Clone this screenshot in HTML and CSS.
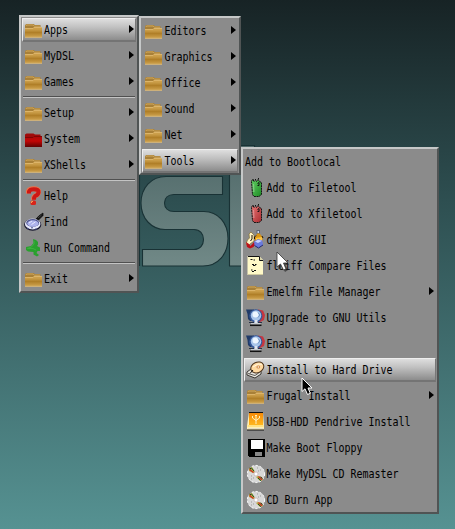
FILE: index.html
```html
<!DOCTYPE html>
<html lang="en">
<head>
<meta charset="utf-8">
<title>Desktop menu</title>
<link rel="stylesheet" href="styles.css">
</head>
<body>
<svg class="defs" width="0" height="0">
  <defs>
    <linearGradient id="gold" x1="0" y1="0" x2="0" y2="1"><stop offset="0" stop-color="#d2a450"/><stop offset=".25" stop-color="#c79a45"/><stop offset=".5" stop-color="#b07f28"/><stop offset=".8" stop-color="#c69843"/><stop offset="1" stop-color="#dab76e"/></linearGradient>
    <linearGradient id="red" x1="0" y1="0" x2="0" y2="1"><stop offset="0" stop-color="#a80808"/><stop offset=".45" stop-color="#c40606"/><stop offset="1" stop-color="#5e0404"/></linearGradient>
    <linearGradient id="greenTag" x1="0" y1="0" x2="1" y2="1"><stop offset="0" stop-color="#63cf63"/><stop offset="1" stop-color="#1c8a24"/></linearGradient>
    <linearGradient id="redTag" x1="0" y1="0" x2="1" y2="1"><stop offset="0" stop-color="#e87474"/><stop offset="1" stop-color="#a82c30"/></linearGradient>
    <linearGradient id="orange" x1="0" y1="0" x2="0" y2="1"><stop offset="0" stop-color="#f58a08"/><stop offset="1" stop-color="#ffb71e"/></linearGradient>
    <linearGradient id="letter" x1="0" y1="145" x2="0" y2="266" gradientUnits="userSpaceOnUse"><stop offset="0" stop-color="#4f6868"/><stop offset="1" stop-color="#718987"/></linearGradient>
    <symbol id="folder" viewBox="0 0 20 20">
      <path d="M1 7V5L2.500 4H9.500L11 5H16.500V8H1Z" fill="#a88038"/>
      <path d="M2 6V5.500L3 5H9L10.500 6.200H16" fill="none" stroke="#cfa75d"/>
      <path d="M1 8H9L10 7H18V18H1Z" fill="url(#gold)"/>
      <path d="M1 8.500H9L10 7.500H18" fill="none" stroke="#dcb469"/>
      <path d="M1 17.500H18" stroke="#cdb07a"/>
    </symbol>
    <symbol id="folder-red" viewBox="0 0 20 20">
      <path d="M1 8V5.500L2.500 4.500H9.500L11 5.500H16.500V8Z" fill="#a00a0a"/>
      <path d="M1 8H9L10 7H18V18H1Z" fill="url(#red)"/>
      <path d="M1 8.500H9L10 7.500H18" fill="none" stroke="#7e0404"/>
    </symbol>
    <symbol id="help" viewBox="0 0 20 20">
      <path d="M4.500 7.500V5Q5.500 2.800 9.500 2.800Q15 2.800 14.500 6.200Q14 9 11 10Q9.500 11 9.500 13.800" fill="none" stroke="#ee7048" stroke-width="5"/>
      <path d="M5 7.500V5.500Q6 3.300 9.800 3.300Q15 3.300 14.600 6.200Q14 8.900 11.200 10Q10 11 10 13.800" fill="none" stroke="#cc1714" stroke-width="4"/>
      <rect x="6.500" y="14.500" width="5.500" height="4.500" rx="1.500" fill="#d8241a"/><path d="M7.500 17V15.500H9" stroke="#f6a056" fill="none"/>
    </symbol>
    <symbol id="find" viewBox="0 0 20 20">
      <path d="M12 7L15 3.800L19 1V3.500L14.500 8Z" fill="#111" stroke="#111" stroke-width=".8"/><path d="M14 6L17.500 3" stroke="#444"/>
      <ellipse cx="8.700" cy="12.700" rx="8.600" ry="6" fill="#15152d"/>
      <ellipse cx="8.700" cy="12" rx="7.800" ry="5.400" fill="#e6e8fa"/>
      <ellipse cx="8.700" cy="10.900" rx="6.500" ry="3.900" fill="#4e548c"/>
      <ellipse cx="8.900" cy="11.500" rx="5.600" ry="3.300" fill="#aeb3ec"/>
      <path d="M5 11L8 9M7.500 12.500L11.500 9.800" stroke="#e9ebff"/>
      <path d="M3 16L5 17M7 15.800H9M11 17H13" stroke="#4e548c"/>
    </symbol>
    <symbol id="run" viewBox="0 0 20 20">
      <path d="M9 1L12 2L14 4V6.500L13 8L16 9.500V13H13.500L12.500 15L15 17L13 18.500L9.500 16.500V14L4 13.500L2 12V9L7 8L9.500 5Z" fill="#2aa02e"/>
      <path d="M10 3V6L7.500 9L3.500 10.500H9L12 12" fill="none" stroke="#3eb040"/>
    </symbol>
    <symbol id="tag" viewBox="0 0 20 20">
      <path d="M5.500 3L7 1.500L8 3.500L9.500 2L10.500 3.500L12 1.500L13.500 3.500L15.500 4.500V16.500L13 18.500H8L6.500 16.500Z" stroke="#151515" stroke-dasharray="2 .6"/>
      <path d="M7 1V2M9.500 1V2M12.500 0V1.500M11.500 5.500L13 4.500V7.500H11.500" stroke="#111" fill="none"/>
      <path d="M7.300 6L7.800 14" stroke="#fff" stroke-opacity=".28" stroke-width="1.500"/>
    </symbol>
    <symbol id="dfm" viewBox="0 0 20 20">
      <path d="M9 7L11 4V1H14V4L16.500 7V12H9Z" fill="#d99414"/><rect x="10.500" y="0" width="3.500" height="3.500" fill="#5c6678"/><rect x="11.500" y="1" width="1.500" height="2" fill="#c9d5e8"/>
      <path d="M10 8L16 7V10H10Z" fill="#ffc744"/>
      <path d="M3 4L5 2L8 5V11L4 14L2 16L0 14L1.500 10L3.500 8Z" fill="#fff3c5" stroke="#77621c" stroke-width=".6"/>
      <path d="M0 12L3 14L4.500 16L8 12V11L10 13L7.500 17L4 18.500L1 17Z" fill="#bd1019"/>
      <path d="M8 11.500L12 9L16.500 10.500L17 15L12.500 18L8.500 15.500Z" fill="#6b7bdd"/><path d="M9 11.500L12 9.700L16 10.700L12 13Z" fill="#cad2ff"/><path d="M8.500 15.500L12.500 18L17 15" stroke="#232a70" fill="none"/>
      <path d="M6 5V9L4.500 11M8.500 9V7L10 5.500M16 6L17 8" stroke="#201505" fill="none"/>
    </symbol>
    <symbol id="doc" viewBox="0 0 20 20">
      <path d="M1.500 0H13L17 4V19H1.500Z" fill="#fff9c8"/><path d="M2 .5H13.500V4.500H17" fill="none" stroke="#111"/><path d="M14 1V4H17Z" fill="#d7d1a8"/><path d="M2 18.500H17" stroke="#cfc99e"/>
      <path d="M4.500 3.500H6.500M7.500 4H9M6 8.500H8M9 8.500H10.500M7 9.500H9.500M5 14H6.500M8 14.500H10M6 15.500H8" stroke="#111"/>
    </symbol>
    <symbol id="globe" viewBox="0 0 20 20">
      <path d="M0 1.500H8V13H4L2 11L1.500 6Z" fill="#213b68"/><path d="M12 1.500L17 2.500L19 7L18 12L13 14.500Z" fill="#c8353e"/>
      <circle cx="9.800" cy="7.800" r="6.600" fill="#36599a"/><circle cx="10" cy="7.500" r="5.200" fill="#a9c5ea"/><circle cx="9.500" cy="6.500" r="3" fill="#edf6ff"/>
      <path d="M12 4.500L14 7L12 9.500" stroke="#6e91c3" fill="none"/><path d="M8.500 12H11.500V15H8.500Z" fill="#dfe5ee"/>
      <path d="M3 14.500H8M12 14.500H16" stroke="#293448"/><path d="M5 15.800H14.500" stroke="#dfe5ee"/><path d="M4 17.300H15.500" stroke="#111" stroke-width="1.500"/>
    </symbol>
    <symbol id="drive" viewBox="0 0 20 20">
      <path d="M1 12L5 9L15 11V14L9 18L1 15Z" fill="#e7e5df" stroke="#17130e" stroke-width=".8"/><path d="M2 13.500L9 15.500L14 12" stroke="#5c5a56" fill="none"/>
      <ellipse cx="11.300" cy="7.400" rx="6.700" ry="5.200" transform="rotate(-25 11.300 7.400)" fill="#ffd9a0" stroke="#50351b"/>
      <path d="M7 7L12 4L16 4.500" stroke="#fff5dd" fill="none"/><ellipse cx="12.300" cy="6.900" rx="1.900" ry="1.500" fill="#cf8b50"/><circle cx="12.300" cy="7" r=".7" fill="#fff"/>
      <path d="M7 10L4 13.500" stroke="#15110d"/>
    </symbol>
    <symbol id="usb" viewBox="0 0 20 20">
      <path d="M3 0H17L18 14V18H1V14Z" fill="#fff0b4"/><rect x="3" y="1" width="14" height="12" fill="url(#orange)"/><path d="M3 .5H17M1 18H18" stroke="#111"/><path d="M1.500 14H17.500" stroke="#ffe283" stroke-width="2"/><path d="M2 16.500H17.500" stroke="#e6dfc4"/>
      <path d="M10 12V3M6.500 4V6L10 8.500L13.500 6V4M9 3.500H11" fill="none" stroke="#fff1bf"/>
    </symbol>
    <symbol id="floppy" viewBox="0 0 20 20" shape-rendering="crispEdges">
      <path d="M2 1H19V19H3L2 18Z" fill="#000"/><rect x="5" y="2" width="12" height="9" fill="#fff"/><rect x="9" y="14" width="7" height="4" fill="#888"/>
    </symbol>
    <symbol id="cd" viewBox="0 0 20 20">
      <circle cx="10" cy="10" r="8.800" fill="#d8d8d8"/><circle cx="10" cy="10" r="8.600" fill="none" stroke="#fff" stroke-dasharray="2 2"/>
      <path d="M3 4L6 3L9 8L7 9L3 7Z" fill="#b9a73f"/><path d="M12 12L16 13L17 16L14 17L10 13Z" fill="#b9a73f"/>
      <path d="M3.500 5.500L7.500 8.500M12.500 12.500L16 16" stroke="#cc332a" stroke-width="1.300"/><path d="M5 3.500L8 7M12 14L15 16.800" stroke="#175b26"/><path d="M3.500 4L5 5M14.500 13L16.500 14.500" stroke="#242424"/>
      <path d="M11 4H12M14 6H15M12 7H13M5 12H6M7 14H8M5 15H6" stroke="#9b9b9b"/><circle cx="10" cy="10" r="2" fill="#fff" stroke="#bda4a4" stroke-width=".6"/>
    </symbol>
  </defs>
</svg>
<main class="desktop">
  <svg class="logo" width="455" height="529" viewBox="0 0 455 529" stroke="#193235" stroke-width="1.1">
    <path d="M139.500 170V266" fill="none"/>
    <path d="M222.500 176.500H166C151 176.500 141 188 141 203C141 219 152 229.500 165 229.500H194C200 229.500 203.500 234 203.500 239.500C203.500 245 200 249.500 194 249.500H142.500V266H203C218 266 228 254 228 238.500C228 223 218 211.500 204 211.500H174C168 211.500 164.500 208 164.500 203C164.500 198 168 194.500 174 194.500H222.500Z" fill="url(#letter)"/>
    <path d="M229.500 145.500H254.500V266H229.500Z" fill="url(#letter)"/>
  </svg>

  <nav class="menu root">
    <div class="item parent active"><svg class="icon"><use href="#folder"/></svg><span>Apps</span></div>
    <div class="item parent"><svg class="icon"><use href="#folder"/></svg><span>MyDSL</span></div>
    <div class="item parent"><svg class="icon"><use href="#folder"/></svg><span>Games</span></div>
    <div class="separator"></div>
    <div class="item parent"><svg class="icon"><use href="#folder"/></svg><span>Setup</span></div>
    <div class="item parent"><svg class="icon"><use href="#folder-red"/></svg><span>System</span></div>
    <div class="item parent"><svg class="icon"><use href="#folder"/></svg><span>XShells</span></div>
    <div class="separator"></div>
    <div class="item"><svg class="icon"><use href="#help"/></svg><span>Help</span></div>
    <div class="item"><svg class="icon"><use href="#find"/></svg><span>Find</span></div>
    <div class="item"><svg class="icon"><use href="#run"/></svg><span>Run Command</span></div>
    <div class="separator"></div>
    <div class="item parent"><svg class="icon"><use href="#folder"/></svg><span>Exit</span></div>
  </nav>

  <nav class="menu apps">
    <div class="item parent"><svg class="icon"><use href="#folder"/></svg><span>Editors</span></div>
    <div class="item parent"><svg class="icon"><use href="#folder"/></svg><span>Graphics</span></div>
    <div class="item parent"><svg class="icon"><use href="#folder"/></svg><span>Office</span></div>
    <div class="item parent"><svg class="icon"><use href="#folder"/></svg><span>Sound</span></div>
    <div class="item parent"><svg class="icon"><use href="#folder"/></svg><span>Net</span></div>
    <div class="item parent active"><svg class="icon"><use href="#folder"/></svg><span>Tools</span></div>
  </nav>

  <nav class="menu tools">
    <div class="item plain"><span>Add to Bootlocal</span></div>
    <div class="item"><svg class="icon green"><use href="#tag"/></svg><span>Add to Filetool</span></div>
    <div class="item"><svg class="icon crimson"><use href="#tag"/></svg><span>Add to Xfiletool</span></div>
    <div class="item"><svg class="icon"><use href="#dfm"/></svg><span>dfmext GUI</span></div>
    <div class="item"><svg class="icon"><use href="#doc"/></svg><span>fldiff Compare Files</span></div>
    <div class="item parent"><svg class="icon"><use href="#folder"/></svg><span>Emelfm File Manager</span></div>
    <div class="item"><svg class="icon"><use href="#globe"/></svg><span>Upgrade to GNU Utils</span></div>
    <div class="item"><svg class="icon"><use href="#globe"/></svg><span>Enable Apt</span></div>
    <div class="item active"><svg class="icon"><use href="#drive"/></svg><span>Install to Hard Drive</span></div>
    <div class="item parent"><svg class="icon"><use href="#folder"/></svg><span>Frugal Install</span></div>
    <div class="item"><svg class="icon"><use href="#usb"/></svg><span>USB-HDD Pendrive Install</span></div>
    <div class="item"><svg class="icon"><use href="#floppy"/></svg><span>Make Boot Floppy</span></div>
    <div class="item"><svg class="icon"><use href="#cd"/></svg><span>Make MyDSL CD Remaster</span></div>
    <div class="item"><svg class="icon"><use href="#cd"/></svg><span>CD Burn App</span></div>
  </nav>

  <svg class="cursor light" width="14" height="21" viewBox="0 0 14 21"><path d="M2.500 3V18.500L6 15.500L9 21L12 19L9.500 14H13Z" fill="#222" opacity=".6"/><path d="M1 1V16L4.500 13L7.500 19L10 18L7.500 12H12Z" fill="#fff" stroke="#333" stroke-width=".8"/></svg>
  <svg class="cursor dark" width="14" height="20" viewBox="0 0 14 20"><path d="M1 1V14.500L4 11.800L6.500 17.500L9.300 16.300L7 11H11Z" fill="#000" stroke="#fff"/></svg>
</main>
</body>
</html>
```
FILE: styles.css
```css
* { box-sizing: border-box; }

body { margin: 0; overflow: hidden; }

.defs { position: absolute; }

.desktop {
  position: relative;
  width: 455px;
  height: 529px;
  overflow: hidden;
  background: linear-gradient(#172325, #2e4f51 38%, #569292);
  font: 10px/26px "DejaVu Sans Mono", monospace;
  color: #000;
}

.logo { position: absolute; left: 0; top: 0; }

.menu {
  position: absolute;
  display: flex;
  flex-direction: column;
  background: #8b8b8b;
  border: 2px solid;
  border-color: #c6c8c8 #505454 #505454 #c6c8c8;
}

.root { left: 19px; top: 15px; width: 120px; height: 278px; }
.apps { left: 139px; top: 16px; width: 102px; height: 159px; }
.tools { left: 241px; top: 147px; width: 198px; height: 367px; }

.item {
  position: relative;
  flex: none;
  display: flex;
  align-items: center;
  height: 26px;
  padding-left: 3px;
  white-space: pre;
}

.item.plain { padding-left: 2px; }

.item span {
  position: relative;
  transform: scaleY(1.22);
  letter-spacing: -0.02px;
}

.tools .icon + span { margin-left: 0.5px; }

.icon {
  position: relative;
  flex: none;
  width: 20px;
  height: 20px;
}

.apps .icon { margin-right: 0.5px; }

.green { fill: url(#greenTag); }
.crimson { fill: url(#redTag); }

.active::before {
  content: "";
  position: absolute;
  inset: 1px;
  background: linear-gradient(#dedede, #c0c0c0 40%, #8c8c8c);
  border: solid;
  border-width: 1px 1px 2px 1px;
  border-color: #eee #777 #747474 #eee;
}

.parent::after {
  content: "";
  position: absolute;
  right: 3px;
  top: 8px;
  border: solid transparent;
  border-width: 4px 0 4px 5px;
  border-left-color: #000;
}

.separator {
  flex: none;
  height: 2px;
  margin: 1px 2px 2px;
  border-top: 1px solid #505050;
  border-bottom: 1px solid #c4c4c4;
}

.cursor { position: absolute; }
.light { left: 276px; top: 251px; }
.dark { left: 301px; top: 377px; }
```
